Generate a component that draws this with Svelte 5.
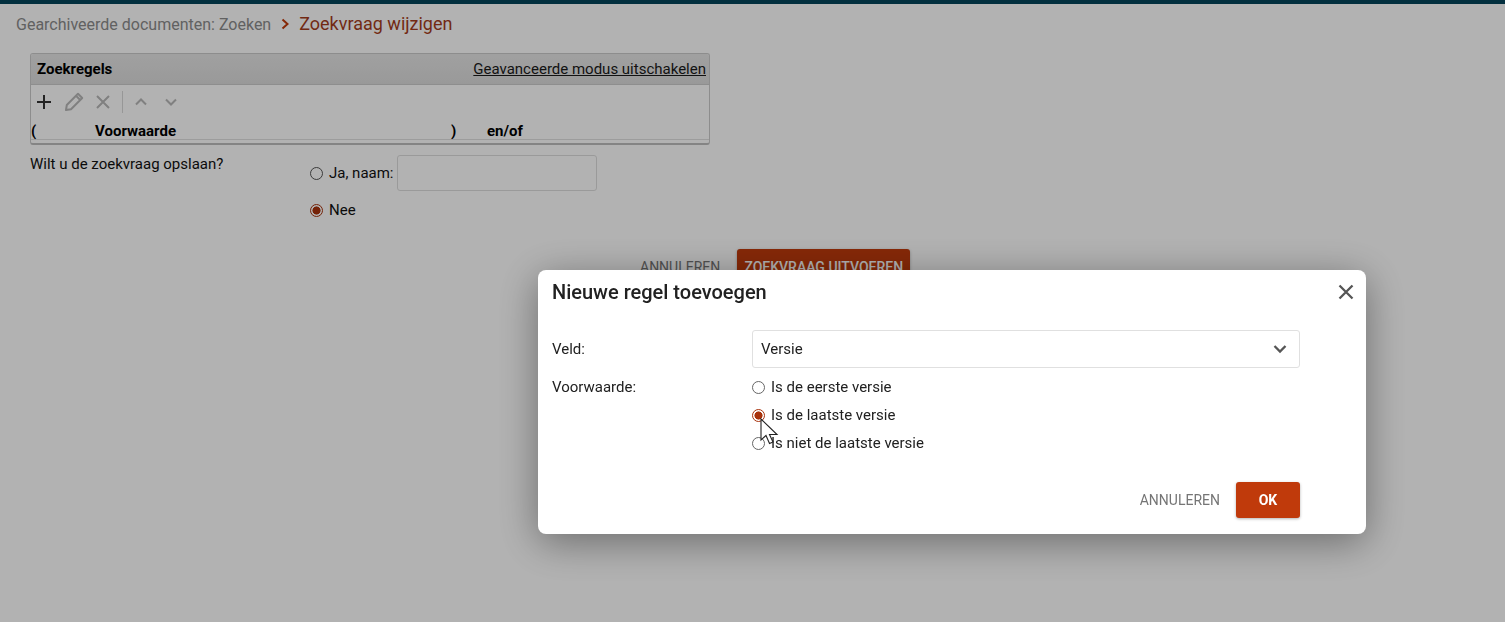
<script>
  const columns = [
    { label: '(', cls: 'c-open' },
    { label: 'Voorwaarde', cls: 'c-cond' },
    { label: ')', cls: 'c-close' },
    { label: 'en/of', cls: 'c-op' }
  ];
  const conditions = [
    { label: 'Is de eerste versie', checked: false },
    { label: 'Is de laatste versie', checked: true },
    { label: 'Is niet de laatste versie', checked: false }
  ];
</script>

<div class="page">
  <div class="topbar"></div>
  <nav class="crumbs">
    <span class="crumb">Gearchiveerde documenten: Zoeken</span>
    <svg class="sep" width="10" height="14" viewBox="0 0 10 14"><path d="M2.500 2.500 7.500 7l-5 4.500" fill="none" stroke="#c03a0b" stroke-width="2"/></svg>
    <span class="current">Zoekvraag wijzigen</span>
  </nav>

  <section class="panel">
    <header class="panel-head">
      <strong>Zoekregels</strong>
      <span class="link">Geavanceerde modus uitschakelen</span>
    </header>
    <div class="toolbar">
      <svg width="16" height="16" viewBox="0 0 16 16"><path d="M8 1v14M1 8h14" stroke="#333" stroke-width="2" fill="none"/></svg>
      <svg class="ml" width="20" height="20" viewBox="0 0 20 20"><path d="M14 1.800 18.200 6 7 17.200 2 18 2.800 13Z M12 3.800l4.200 4.200" fill="none" stroke="#b8b8b8" stroke-width="2" stroke-linejoin="round"/></svg>
      <svg class="ml2" width="16" height="16" viewBox="0 0 16 16"><path d="M2 2l12 12M14 2 2 14" stroke="#b8b8b8" stroke-width="2" fill="none"/></svg>
      <span class="divider"></span>
      <svg class="ml3" width="14" height="14" viewBox="0 0 14 14"><path d="M2 9.500 7 4.500l5 5" stroke="#b8b8b8" stroke-width="2" fill="none"/></svg>
      <svg class="ml4" width="14" height="14" viewBox="0 0 14 14"><path d="M2 4.500 7 9.500l5-5" stroke="#b8b8b8" stroke-width="2" fill="none"/></svg>
    </div>
    <div class="cols">
      {#each columns as col}
        <span class={col.cls}>{col.label}</span>
      {/each}
    </div>
  </section>

  <div class="save">
    <div class="save-q">Wilt u de zoekvraag opslaan?</div>
    <div class="save-opts">
      <div class="opt opt-name">
        <span class="radio"></span>
        <span class="opt-label">Ja, naam:</span>
        <span class="input"></span>
      </div>
      <div class="opt opt-no">
        <span class="radio on"></span>
        <span class="opt-label">Nee</span>
      </div>
    </div>
  </div>

  <div class="actions">
    <span class="btn-text">ANNULEREN</span>
    <span class="btn-primary wide">ZOEKVRAAG UITVOEREN</span>
  </div>
</div>

<div class="scrim"></div>

<div class="dialog">
  <div class="dlg-head">
    <h2>Nieuwe regel toevoegen</h2>
    <svg width="16" height="16" viewBox="0 0 16 16"><path d="M1.500 1.500l13 13M14.500 1.500l-13 13" stroke="#555" stroke-width="2.300" fill="none"/></svg>
  </div>
  <div class="field">
    <span class="f-label">Veld:</span>
    <div class="select">
      <span>Versie</span>
      <svg width="14" height="10" viewBox="0 0 14 10"><path d="M1.500 2 7 7.500 12.500 2" stroke="#555" stroke-width="2.300" fill="none"/></svg>
    </div>
  </div>
  <div class="field cond">
    <span class="f-label">Voorwaarde:</span>
    <div class="cond-list">
      {#each conditions as c}
        <div class="cond-row">
          <span class="radio light" class:on={c.checked}></span>
          <span>{c.label}</span>
        </div>
      {/each}
    </div>
  </div>
  <div class="dlg-foot">
    <span class="btn-text">ANNULEREN</span>
    <span class="btn-primary ok">OK</span>
  </div>
</div>

<svg class="cursor" width="20" height="28" viewBox="0 0 20 28">
  <path d="M1 1v21l5-4.500 3.500 8 3.500-1.500-3.500-7.500H17Z" fill="#fff" stroke="#222" stroke-width="1.100" stroke-linejoin="miter"/>
</svg>

<style>
  :global(body) {
    margin: 0;
    background: #fff;
    font-family: Roboto, "Liberation Sans", sans-serif;
    overflow: hidden;
  }
  .page {
    height: 622px;
    box-sizing: border-box;
    font-size: 15px;
    color: #111;
  }
  .topbar { height: 4px; background: #05465b; }
  .crumbs {
    display: flex;
    align-items: center;
    height: 40px;
    padding-left: 16px;
  }
  .crumb { font-size: 16px; color: #8c8c8c; }
  .sep { margin: 0 9px 0 9px; }
  .current { font-size: 18px; color: #a43c1c; position: relative; top: -1px; }

  .panel {
    width: 678px;
    height: 89px;
    margin: 9px 0 0 30px;
    border: 1px solid #cbcbcb;
    border-bottom: 2px solid #bdbdbd;
    border-radius: 3px;
    overflow: hidden;
  }
  .panel-head {
    display: flex;
    justify-content: space-between;
    align-items: center;
    height: 30px;
    padding: 0 3px 0 6px;
    background: linear-gradient(#e6e6e6, #dcdcdc);
    border-bottom: 1px solid #ccc;
    color: #000;
  }
  .panel-head strong { font-weight: 700; font-size: 15px; }
  .link { font-size: 15px; text-decoration: underline; color: #1a1a1a; }
  .toolbar {
    display: flex;
    align-items: center;
    height: 33px;
    padding-left: 5px;
  }
  .ml { margin-left: 12px; }
  .ml2 { margin-left: 11px; }
  .divider { width: 1px; height: 22px; background: #d8d8d8; margin-left: 11px; }
  .ml3 { margin-left: 11px; }
  .ml4 { margin-left: 16px; }
  .cols {
    display: flex;
    align-items: center;
    box-sizing: border-box;
    height: 22px;
    padding-top: 4px;
    border-bottom: 1px solid #e0e0e0;
    font-weight: 700;
    color: #000;
  }
  .c-open { width: 64px; }
  .c-cond { width: 356px; }
  .c-close { width: 36px; }

  .save { display: flex; margin: 9px 0 0 30px; }
  .save-q { width: 280px; line-height: 20px; }
  .save-opts { margin-top: 1px; }
  .opt { display: flex; align-items: center; }
  .opt-name { height: 36px; }
  .opt-no { height: 38px; }
  .opt-label { margin-left: 6px; }
  .input {
    width: 198px;
    height: 34px;
    margin-left: 3px;
    border: 1px solid #ddd;
    border-radius: 3px;
  }
  .radio {
    box-sizing: border-box;
    flex: none;
    width: 13px;
    height: 13px;
    border: 1px solid #555;
    border-radius: 50%;
    background: #fff;
  }
  .radio.on {
    border: 1px solid #a8320c;
    background: radial-gradient(circle, #a8320c 0 3.800px, #fff 4.300px);
  }
  .opt .radio { background-color: transparent; }
  .opt .radio.on { background: radial-gradient(circle, #a8320c 0 3.800px, transparent 4.300px); }
  .radio.light { border-color: #666; }
  .radio.light.on { border-color: #a8320c; }

  .actions {
    display: flex;
    align-items: center;
    height: 36px;
    margin: 20px 0 0 640px;
    gap: 17px;
  }
  .btn-text { font-size: 14px; color: #757575; }
  .btn-primary {
    display: flex;
    align-items: center;
    justify-content: center;
    background: #c03a0b;
    color: #fff;
    border-radius: 3px;
    font-size: 14px;
    font-weight: 500;
    box-shadow: 0 1px 3px rgba(0,0,0,.3);
  }
  .wide { width: 173px; height: 36px; }
  .ok { width: 64px; height: 36px; font-weight: 700; }

  .scrim {
    position: fixed;
    inset: 0;
    background: rgba(0,0,0,.3);
  }
  .dialog {
    position: fixed;
    left: 538px;
    top: 270px;
    width: 828px;
    height: 264px;
    box-sizing: border-box;
    padding: 0 14px;
    background: #fff;
    border-radius: 8px;
    box-shadow: 0 8px 40px rgba(0,0,0,.4);
    color: #212121;
    font-size: 15px;
  }
  .dlg-head {
    display: flex;
    justify-content: space-between;
    align-items: center;
    height: 44px;
    margin-right: -2px;
  }
  .dlg-head h2 { margin: 0; font-size: 20px; font-weight: 500; color: #212121; }
  .field { display: flex; align-items: center; margin-top: 16px; }
  .f-label { width: 200px; flex: none; }
  .select {
    box-sizing: border-box;
    display: flex;
    justify-content: space-between;
    align-items: center;
    width: 548px;
    height: 38px;
    padding: 0 12px 0 8px;
    border: 1px solid #e0e0e0;
    border-radius: 3px;
  }
  .field.cond { align-items: flex-start; margin-top: 5px; }
  .f-label { line-height: 28px; }
  .cond-row { display: flex; align-items: center; gap: 6px; height: 28px; }
  .dlg-foot {
    display: flex;
    align-items: center;
    justify-content: flex-end;
    gap: 16px;
    margin-top: 25px;
    padding-right: 52px;
  }
  .cursor { position: fixed; left: 760px; top: 418px; }
</style>
